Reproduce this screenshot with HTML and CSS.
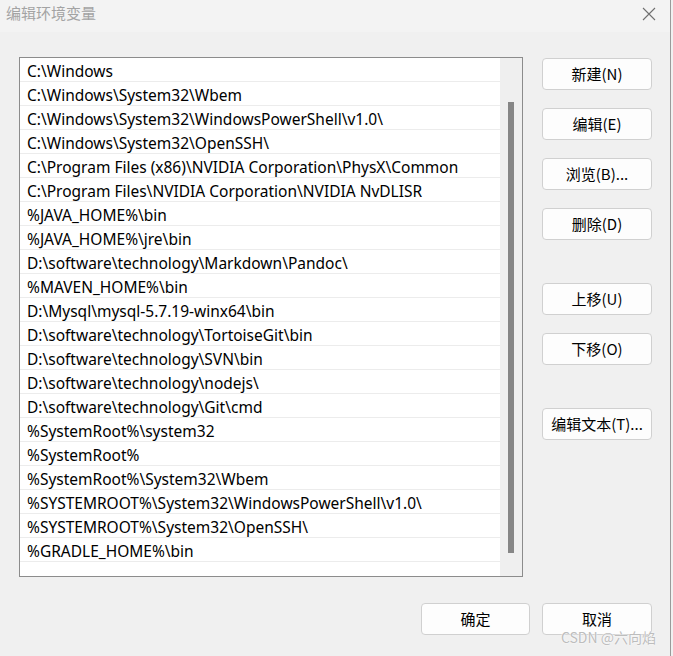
FILE: index.html
```html
<!DOCTYPE html>
<html lang="zh-CN">
<head>
<meta charset="utf-8">
<title>编辑环境变量</title>
<link rel="stylesheet" href="styles.css">
</head>
<body>
<div class="window">
  <div class="titlebar">
    <span class="title">编辑环境变量</span>
    <svg class="close" width="14" height="14" viewBox="0 0 14 14"><path d="M1 1 L13 13 M13 1 L1 13" stroke="#6f6f6f" stroke-width="1.1" fill="none"/></svg>
  </div>
  <div class="content">
    <div class="main">
      <div class="listbox">
        <div class="rows">
          <div class="row">C:\Windows</div>
          <div class="row">C:\Windows\System32\Wbem</div>
          <div class="row">C:\Windows\System32\WindowsPowerShell\v1.0\</div>
          <div class="row">C:\Windows\System32\OpenSSH\</div>
          <div class="row">C:\Program Files (x86)\NVIDIA Corporation\PhysX\Common</div>
          <div class="row">C:\Program Files\NVIDIA Corporation\NVIDIA NvDLISR</div>
          <div class="row">%JAVA_HOME%\bin</div>
          <div class="row">%JAVA_HOME%\jre\bin</div>
          <div class="row">D:\software\technology\Markdown\Pandoc\</div>
          <div class="row">%MAVEN_HOME%\bin</div>
          <div class="row">D:\Mysql\mysql-5.7.19-winx64\bin</div>
          <div class="row">D:\software\technology\TortoiseGit\bin</div>
          <div class="row">D:\software\technology\SVN\bin</div>
          <div class="row">D:\software\technology\nodejs\</div>
          <div class="row">D:\software\technology\Git\cmd</div>
          <div class="row">%SystemRoot%\system32</div>
          <div class="row">%SystemRoot%</div>
          <div class="row">%SystemRoot%\System32\Wbem</div>
          <div class="row">%SYSTEMROOT%\System32\WindowsPowerShell\v1.0\</div>
          <div class="row">%SYSTEMROOT%\System32\OpenSSH\</div>
          <div class="row">%GRADLE_HOME%\bin</div>
          <div class="row"></div>
        </div>
        <div class="track"><div class="thumb"></div></div>
      </div>
      <div class="side">
        <div class="group">
          <button class="btn">新建(N)</button>
          <button class="btn">编辑(E)</button>
          <button class="btn">浏览(B)...</button>
          <button class="btn">删除(D)</button>
        </div>
        <div class="group">
          <button class="btn">上移(U)</button>
          <button class="btn">下移(O)</button>
        </div>
        <div class="group">
          <button class="btn">编辑文本(T)...</button>
        </div>
      </div>
    </div>
    <div class="footer">
      <button class="btn">确定</button>
      <button class="btn">取消</button>
    </div>
  </div>
  <div class="watermark">CSDN @六向焰</div>
</div>
</body>
</html>
```

FILE: styles.css
```css
* { box-sizing: border-box; }
html, body {
  margin: 0;
  padding: 0;
  background: #f0f0f0;
}
body {
  font-family: "Noto Sans", "Noto Sans CJK SC", sans-serif;
  color: #000;
}
.window {
  position: relative;
  width: 671px;
  height: 656px;
  background: #f0f0f0;
  border-right: 1px solid #9a9a9a;
  display: flex;
  flex-direction: column;
}
.titlebar {
  height: 32px;
  background: #f3f3f3;
  display: flex;
  align-items: flex-start;
  justify-content: space-between;
  padding: 2px 14px 0 6px;
}
.title {
  font-family: "Noto Sans CJK SC", sans-serif;
  font-size: 15px;
  line-height: 22px;
  color: #a3a3a3;
}
.close {
  margin-top: 5px;
}
.content {
  flex: 1;
  display: flex;
  flex-direction: column;
  padding: 25px 0 0 19px;
}
.main {
  display: flex;
  align-items: flex-start;
}
.listbox {
  width: 504px;
  height: 520px;
  border: 1px solid #8c8c8c;
  background: #fff;
  display: flex;
}
.rows {
  width: 480px;
  height: 518px;
  overflow: hidden;
}
.row {
  height: 24px;
  border-bottom: 1px solid #ececec;
  padding: 2px 0 0 7px;
  font-size: 15.5px;
  line-height: 22px;
  white-space: nowrap;
  color: #000;
}
.track {
  width: 22px;
  height: 518px;
  background: #efefef;
  padding: 44px 0 0 8px;
}
.thumb {
  width: 6px;
  height: 451px;
  background: #868686;
}
.side {
  margin-left: 19px;
  display: flex;
  flex-direction: column;
  gap: 43px;
  padding-top: 1px;
}
.group {
  display: flex;
  flex-direction: column;
  gap: 18px;
}
.btn {
  width: 110px;
  height: 32px;
  background: #fdfdfd;
  border: 1px solid #d0d0d0;
  border-radius: 4px;
  font-family: "Noto Sans CJK SC", sans-serif;
  font-size: 15px;
  color: #000;
  padding: 0 0 1px 0;
  line-height: 30px;
}
.footer {
  display: flex;
  justify-content: flex-end;
  gap: 12px;
  padding-right: 18px;
  margin-top: 26px;
}
.footer .btn {
  width: 109px;
}
.footer .btn + .btn {
  width: 110px;
}
.watermark {
  position: absolute;
  right: 14px;
  bottom: 9px;
  font-family: "Noto Sans CJK SC", sans-serif;
  font-size: 14px;
  color: #bdbdbd;
  text-shadow: 0 0 2px #fff, 0 0 1px #fff;
}
```
